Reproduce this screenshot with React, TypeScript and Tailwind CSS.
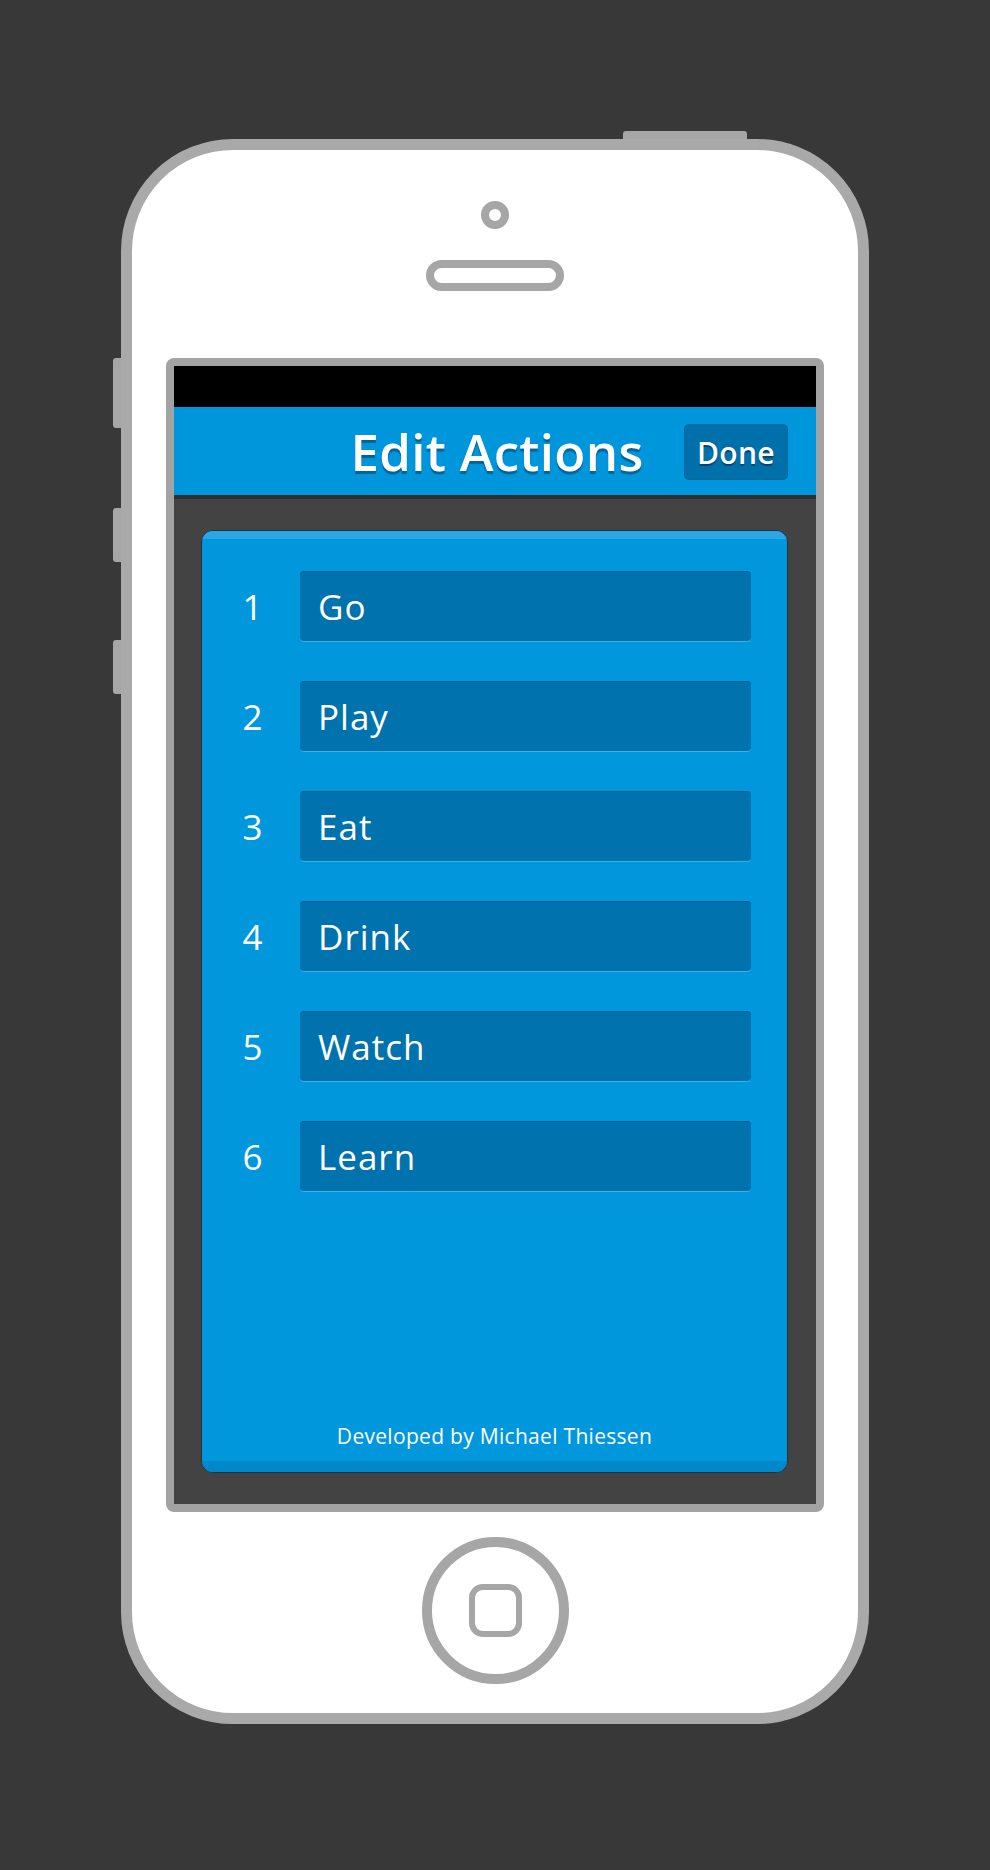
const actions = ["Go", "Play", "Eat", "Drink", "Watch", "Learn"]

const font = "font-['Open_Sans','Lato',sans-serif]"

export default function App() {
  return (
    <div className={`w-[990px] h-[1870px] bg-[#383838] pt-[139px] flex flex-col items-center ${font}`}>
      <div className="relative w-[748px] h-[1585px] rounded-[112px] border-[11px] border-[#a9a9a9] bg-white flex flex-col items-center">
        {/* hardware buttons */}
        <div className="absolute left-[491px] -top-[19px] w-[124px] h-[8px] rounded-t-[3px] bg-[#a6a6a6]" />
        <div className="absolute -left-[19px] top-[208px] w-[8px] h-[70px] rounded-l-[3px] bg-[#a6a6a6]" />
        <div className="absolute -left-[19px] top-[358px] w-[8px] h-[54px] rounded-l-[3px] bg-[#a6a6a6]" />
        <div className="absolute -left-[19px] top-[490px] w-[8px] h-[54px] rounded-l-[3px] bg-[#a6a6a6]" />

        {/* camera + speaker */}
        <div className="mt-[51px] w-[28px] h-[28px] rounded-full border-[8px] border-[#a6a6a6]" />
        <div className="mt-[31px] w-[138px] h-[31px] rounded-full border-[8px] border-[#a6a6a6]" />

        {/* screen */}
        <div className="mt-[67px] w-[658px] h-[1154px] rounded-[8px] border-[8px] border-[#a3a3a3] bg-[#434343] flex flex-col overflow-hidden">
          <div className="h-[41px] bg-black shrink-0" />
          <div className="relative h-[92px] shrink-0 bg-[#0096dc] border-b-[4px] border-[#2f2f2f] flex items-center justify-center">
            <h1 className="ml-[4px] text-white font-semibold text-[51px] leading-none tracking-[0.3px] [text-shadow:0_3px_1px_rgba(0,60,100,0.55)]">
              Edit Actions
            </h1>
            <button className="absolute right-[28px] top-[17px] w-[104px] h-[56px] rounded-[5px] bg-[#0070aa] border border-[#00659a] text-white text-[30px] font-semibold tracking-[0.3px] [text-shadow:0_2px_1px_rgba(0,40,70,0.6)]">
              Done
            </button>
          </div>

          <div className="flex-1 pl-[27px] pr-[28px] pt-[31px] pb-[31px]">
            <div className="h-full rounded-[12px] border border-[#25323a] bg-[#0097dd] overflow-hidden flex flex-col">
              <div className="h-[8px] bg-[#2aa7e4] shrink-0" />
              <div className="flex flex-col gap-[39px] pt-[32px] pr-[36px]">
                {actions.map((a, i) => (
                  <div key={a} className="flex items-center h-[71px]">
                    <div className="w-[98px] pl-[3px] text-center text-white text-[35px] leading-none">{i + 1}</div>
                    <div className="flex-1 h-[71px] rounded-[4px] bg-[#0072ad] border-t border-t-[#005e8e] border-b border-b-[#3cb0e8] flex items-center pl-[18px] text-white text-[35px] tracking-[1px] leading-none">
                      {a}
                    </div>
                  </div>
                ))}
              </div>
              <div className="flex-1" />
              <div className="text-center text-white text-[21px] tracking-[0.3px] leading-none pb-[14px]">
                Developed by Michael Thiessen
              </div>
              <div className="h-[11px] bg-[#0088cb] shrink-0" />
            </div>
          </div>
        </div>

        {/* home button */}
        <div className="mt-[25px] w-[147px] h-[147px] rounded-full border-[10px] border-[#a6a6a6] flex items-center justify-center">
          <div className="w-[53px] h-[53px] rounded-[14px] border-[6px] border-[#a6a6a6]" />
        </div>
      </div>
    </div>
  )
}
